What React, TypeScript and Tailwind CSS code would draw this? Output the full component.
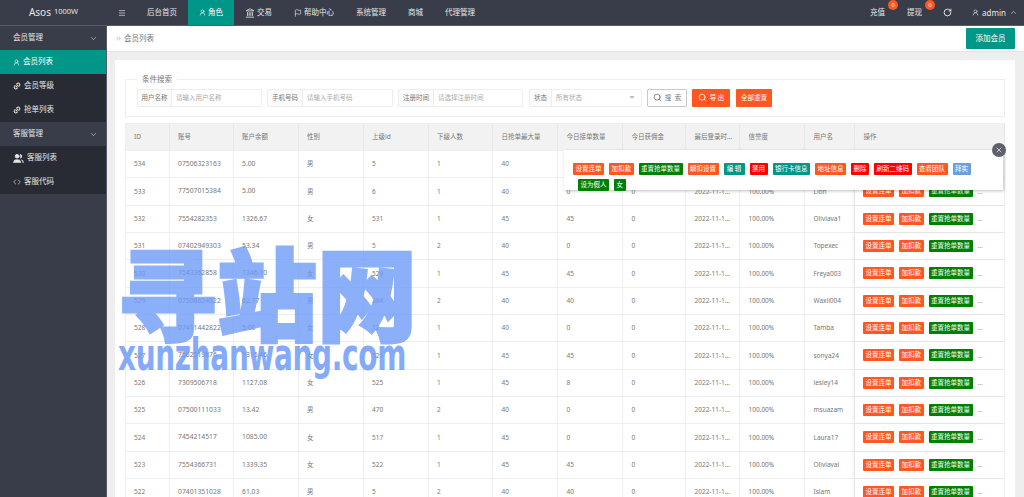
import React from "react";
import { ChevronDown, ChevronUp, ChevronsRight, RotateCw, Search, UserRound, Link2, Code, Flag, Menu, Users, Landmark, X } from "lucide-react";

const cols = "grid-cols-[43.5px_64px_65px_65px_65px_64.5px_65px_65px_63px_54px_65px_50px_150px]";
const font = { fontFamily: '"Noto Sans","Noto Sans CJK SC",sans-serif' };

const heads = ["ID", "账号", "账户余额", "性别", "上级id", "下级人数", "日抢单最大量", "今日接单数量", "今日获佣金", "最后登录时...", "信誉度", "用户名", "操作"];
const rows = [
  ["534", "07506323163", "5.00", "男", "5", "1", "40", "0", "0", "", "", ""],
  ["533", "77507015384", "5.00", "男", "6", "1", "40", "0", "0", "2022-11-1...", "100.00%", "Lion"],
  ["532", "7554282353", "1326.67", "女", "531", "1", "45", "45", "0", "2022-11-1...", "100.00%", "Oliviava1"],
  ["531", "07402949303", "53.34", "男", "5", "2", "40", "0", "0", "2022-11-1...", "100.00%", "Topexec"],
  ["530", "7543362858", "1346.10", "女", "529", "1", "45", "45", "0", "2022-11-1...", "100.00%", "Freya003"],
  ["529", "07508624322", "62.77", "男", "384", "2", "40", "40", "0", "2022-11-1...", "100.00%", "Waxii004"],
  ["528", "07411442822", "5.00", "女", "12", "1", "40", "0", "0", "2022-11-1...", "100.00%", "Tamba"],
  ["527", "7562519876", "1315.46", "女", "521", "1", "45", "45", "0", "2022-11-1...", "100.00%", "sonya24"],
  ["526", "7309506718", "1127.08", "女", "525", "1", "45", "8", "0", "2022-11-1...", "100.00%", "lesley14"],
  ["525", "07500111033", "13.42", "男", "470", "2", "40", "0", "0", "2022-11-1...", "100.00%", "msuazam"],
  ["524", "7454214517", "1085.00", "女", "517", "1", "45", "0", "0", "2022-11-1...", "100.00%", "Laura17"],
  ["523", "7554366731", "1339.35", "女", "522", "1", "45", "45", "0", "2022-11-1...", "100.00%", "Oliviaval"],
  ["522", "07401351028", "61.03", "男", "5", "2", "40", "40", "0", "2022-11-1...", "100.00%", "Islam"],
];

const popup: [string, string][] = [
  ["设置连单", "bg-[#ff5722]"], ["加扣款", "bg-[#ff5722]"], ["重置抢单数量", "bg-[#008000]"], ["瞬扣设置", "bg-[#ff5722]"],
  ["编 辑", "bg-[#009688] w-[21px] text-center"], ["禁用", "bg-[#ff0000]"], ["银行卡信息", "bg-[#009688]"], ["地址信息", "bg-[#ff5722]"],
  ["删除", "bg-[#ff0000]"], ["刷新二维码", "bg-[#ff0000]"], ["查看团队", "bg-[#ff5722]"], ["拜实", "bg-[#6a9fe0]"],
  ["设为假人", "bg-[#008000]"], ["女", "bg-[#008000]"],
];

function Tag({ label, cls }: { label: string; cls: string }) {
  return <span className={`inline-block h-[12px] rounded-[1px] px-[2.5px] text-[6.5px] leading-[12px] whitespace-pre text-white ${cls}`}>{label}</span>;
}

function Field({ label, ph, labelW, inputW, select }: { label: string; ph: string; labelW: string; inputW: string; select?: boolean }) {
  return (
    <div className="flex h-[18px] rounded-[1px] border border-[#eeeeee] text-[6.5px]">
      <div className={`flex items-center justify-center border-r border-[#eeeeee] bg-[#fbfbfb] text-[#777] ${labelW}`}>{label}</div>
      <div className={`flex items-center justify-between bg-white px-[4px] text-[#aaa] ${inputW}`}>
        <span>{ph}</span>
        {select && <span className="mr-[2px] h-0 w-0 border-x-[3px] border-t-[3px] border-x-transparent border-t-[#c2c2c2]" />}
      </div>
    </div>
  );
}

function SideItem({ icon, label, active }: { icon: React.ReactNode; label: string; active?: boolean }) {
  return (
    <div className={`flex h-[24px] items-center gap-[3px] pl-[13px] text-[7.5px] text-[#e6e6e6] ${active ? "bg-[#009688] text-white" : "bg-[#282b33]"}`}>
      {icon}
      <span>{label}</span>
    </div>
  );
}

function SideGroup({ label }: { label: string }) {
  return (
    <div className="flex h-[24px] items-center justify-between bg-[#393d49] pr-[8px] pl-[13px] text-[7.5px] text-[#e6e6e6]">
      <span>{label}</span>
      <ChevronDown size={9} strokeWidth={1.5} />
    </div>
  );
}

function NavItem({ icon, label, active }: { icon?: React.ReactNode; label: string; active?: boolean }) {
  return (
    <div className={`flex h-full items-center gap-[2px] px-[11px] text-[7.5px] text-[#e6e6e6] ${active ? "bg-[#009688] text-white" : ""}`}>
      {icon}
      <span>{label}</span>
    </div>
  );
}

export default function App() {
  return (
    <div className="relative flex h-[497px] w-[1024px] flex-col overflow-hidden bg-[#eeeeee] text-[#777]" style={font}>
      <header className="flex h-[26px] shrink-0 items-center border-b border-[#555a66] bg-[#393d49]">
        <div className="flex w-[107px] items-baseline justify-center text-[10px] text-[#e6e6e6]">
          <span>Asos</span>
          <span className="relative top-[-2.5px] ml-[3px] text-[7.5px]">1000W</span>
        </div>
        <div className="flex h-full items-center">
          <div className="flex h-full items-center px-[11px]"><Menu size={8} className="text-[#e6e6e6]" /></div>
          <div className="-ml-[1px] flex h-full items-center">
            <NavItem label="后台首页" />
            <NavItem active icon={<UserRound size={7} />} label="角色" />
            <NavItem icon={<Landmark size={10} />} label="交易" />
            <NavItem icon={<Flag size={8} />} label="帮助中心" />
            <NavItem label="系统管理" />
            <NavItem label="商城" />
            <NavItem label="代理管理" />
          </div>
        </div>
        <div className="ml-auto flex h-full items-center pr-[6px] text-[7.5px] text-[#e6e6e6]">
          <div className="relative mr-[22px]">充值<span className="absolute top-[-7px] left-[18px] flex h-[10px] w-[10px] items-center justify-center rounded-full bg-[#ff5722] text-[5.5px] text-white">0</span></div>
          <div className="relative mr-[21px]">提现<span className="absolute top-[-7px] left-[18px] flex h-[10px] w-[10px] items-center justify-center rounded-full bg-[#ff5722] text-[5.5px] text-white">0</span></div>
          <RotateCw size={9} strokeWidth={2.5} className="mr-[20px]" />
          <UserRound size={7} className="mr-[3px]" />
          <span className="mr-[3px] text-[8px]">admin</span>
          <ChevronUp size={9} strokeWidth={1.5} />
        </div>
      </header>

      <div className="flex min-h-0 flex-1">
        <aside className="w-[107px] shrink-0 border-r border-[#555a66] bg-[#393d49]">
          <SideGroup label="会员管理" />
          <SideItem active icon={<UserRound size={7} />} label="会员列表" />
          <SideItem icon={<Link2 size={8} strokeWidth={3} className="-rotate-45" />} label="会员等级" />
          <SideItem icon={<Link2 size={8} strokeWidth={3} className="-rotate-45" />} label="抢单列表" />
          <SideGroup label="客服管理" />
          <SideItem icon={<Users size={11} fill="currentColor" />} label="客服列表" />
          <SideItem icon={<Code size={8} />} label="客服代码" />
        </aside>

        <main className="min-w-0 flex-1">
          <div className="flex h-[26px] items-center justify-between border-b border-[#e4e4e4] bg-white pr-[9px] pl-[8px] text-[7.5px]">
            <div className="flex items-center gap-[2px]">
              <ChevronsRight size={7} className="text-[#999]" />
              <span>会员列表</span>
            </div>
            <div className="flex h-[21px] w-[49px] items-center justify-center rounded-[1px] bg-[#009688] text-[7.5px] text-white">添加会员</div>
          </div>

          <section className="mt-[8px] mr-[9px] ml-[8px] h-[500px] bg-white px-[10px] pt-[17px]">
            <fieldset className="h-[40px] border border-[#eeeeee] pl-[11px]">
              <legend className="px-[5px] text-[7.5px] leading-[5px] text-[#777]">条件搜索</legend>
              <div className="mt-[6.5px] flex items-center">
                <Field label="用户名称" ph="请输入用户名称" labelW="w-[34px]" inputW="w-[89px]" />
                <div className="w-[5px]" />
                <Field label="手机号码" ph="请输入手机号码" labelW="w-[35px]" inputW="w-[89px]" />
                <div className="w-[5px]" />
                <Field label="注册时间" ph="请选择注册时间" labelW="w-[35px]" inputW="w-[88px]" />
                <div className="w-[6px]" />
                <Field select label="状态" ph="所有状态" labelW="w-[22px]" inputW="w-[89px]" />
                <div className="ml-[5px] flex h-[18px] w-[40px] items-center justify-center gap-[3px] rounded-[1px] border border-[#c9c9c9] bg-white text-[6.5px]">
                  <Search size={9} className="text-[#666]" /><span className="whitespace-pre">搜  索</span>
                </div>
                <div className="ml-[5px] flex h-[18px] w-[38px] items-center justify-center gap-[3px] rounded-[1px] bg-[#ff5722] text-[6.5px] text-white">
                  <Search size={9} /><span>导 出</span>
                </div>
                <div className="ml-[6px] flex h-[18px] w-[36px] items-center justify-center rounded-[1px] bg-[#ff5722] text-[6.5px] text-white">全部重置</div>
              </div>
            </fieldset>

            <div className="mt-[6px] border-l border-[#eeeeee] text-[6.5px]">
              <div className={`grid h-[28px] ${cols} border-y border-[#eeeeee] bg-[#f2f2f2]`}>
                {heads.map((h, i) => (
                  <div key={h} className={`flex items-center border-r border-[#e6e6e6] ${i === 0 ? "pl-[8px]" : "pl-[8.5px]"}`}>{h}</div>
                ))}
              </div>
              {rows.map((r) => (
                <div key={r[0]} className={`grid h-[27.33px] ${cols} border-b border-[#eeeeee]`}>
                  {r.map((c, i) => (
                    <div key={i} className={`flex items-center border-r border-[#eeeeee] ${i === 0 ? "pl-[8px]" : "pl-[8.5px]"} ${i === 1 || i === 2 ? "text-[6.8px]" : ""}`}>{c}</div>
                  ))}
                  <div className="flex items-center gap-[5px] border-r border-[#eeeeee] pl-[8px] shadow-[-2px_0_3px_rgba(0,0,0,0.05)]">
                    <Tag label="设置连单" cls="bg-[#ff5722]" />
                    <Tag label="加扣款" cls="bg-[#ff5722]" />
                    <Tag label="重置抢单数量" cls="bg-[#008000]" />
                    <span className="text-[6.5px] text-[#999]">...</span>
                  </div>
                </div>
              ))}
            </div>
          </section>
        </main>
      </div>

      <div className="absolute top-[150px] left-[564px] h-[40px] w-[439px] bg-white pt-[8.5px] pl-[9px] leading-[13px] shadow-[1px_1px_3px_rgba(0,0,0,0.25)]">
        {popup.map(([label, cls], i) => (
          <Tag key={label} label={label} cls={`${cls} ${i === 0 ? "" : "ml-[5px]"}`} />
        ))}
      </div>
      <div className="absolute top-[143px] left-[992px] flex h-[14px] w-[14px] items-center justify-center rounded-full bg-[#5f5f6b] text-white">
        <X size={8} />
      </div>

      <div className="pointer-events-none absolute top-[225px] left-[117px] flex w-[296px] justify-between text-[100px] leading-[130px] font-black text-[#6f9cf8] opacity-80 [-webkit-text-stroke:3px_#6f9cf8]" style={{ fontFamily: '"Noto Sans CJK SC",sans-serif' }}>
        <span>寻</span><span>站</span><span>网</span>
      </div>
      <div className="pointer-events-none absolute top-[329px] left-[118px] origin-left scale-x-[0.635] text-[44px] leading-[52px] font-bold tracking-[-0.5px] text-[#6f9cf8] opacity-85" style={{ fontFamily: '"DejaVu Sans",sans-serif' }}>xunzhanwang.com</div>
    </div>
  );
}
